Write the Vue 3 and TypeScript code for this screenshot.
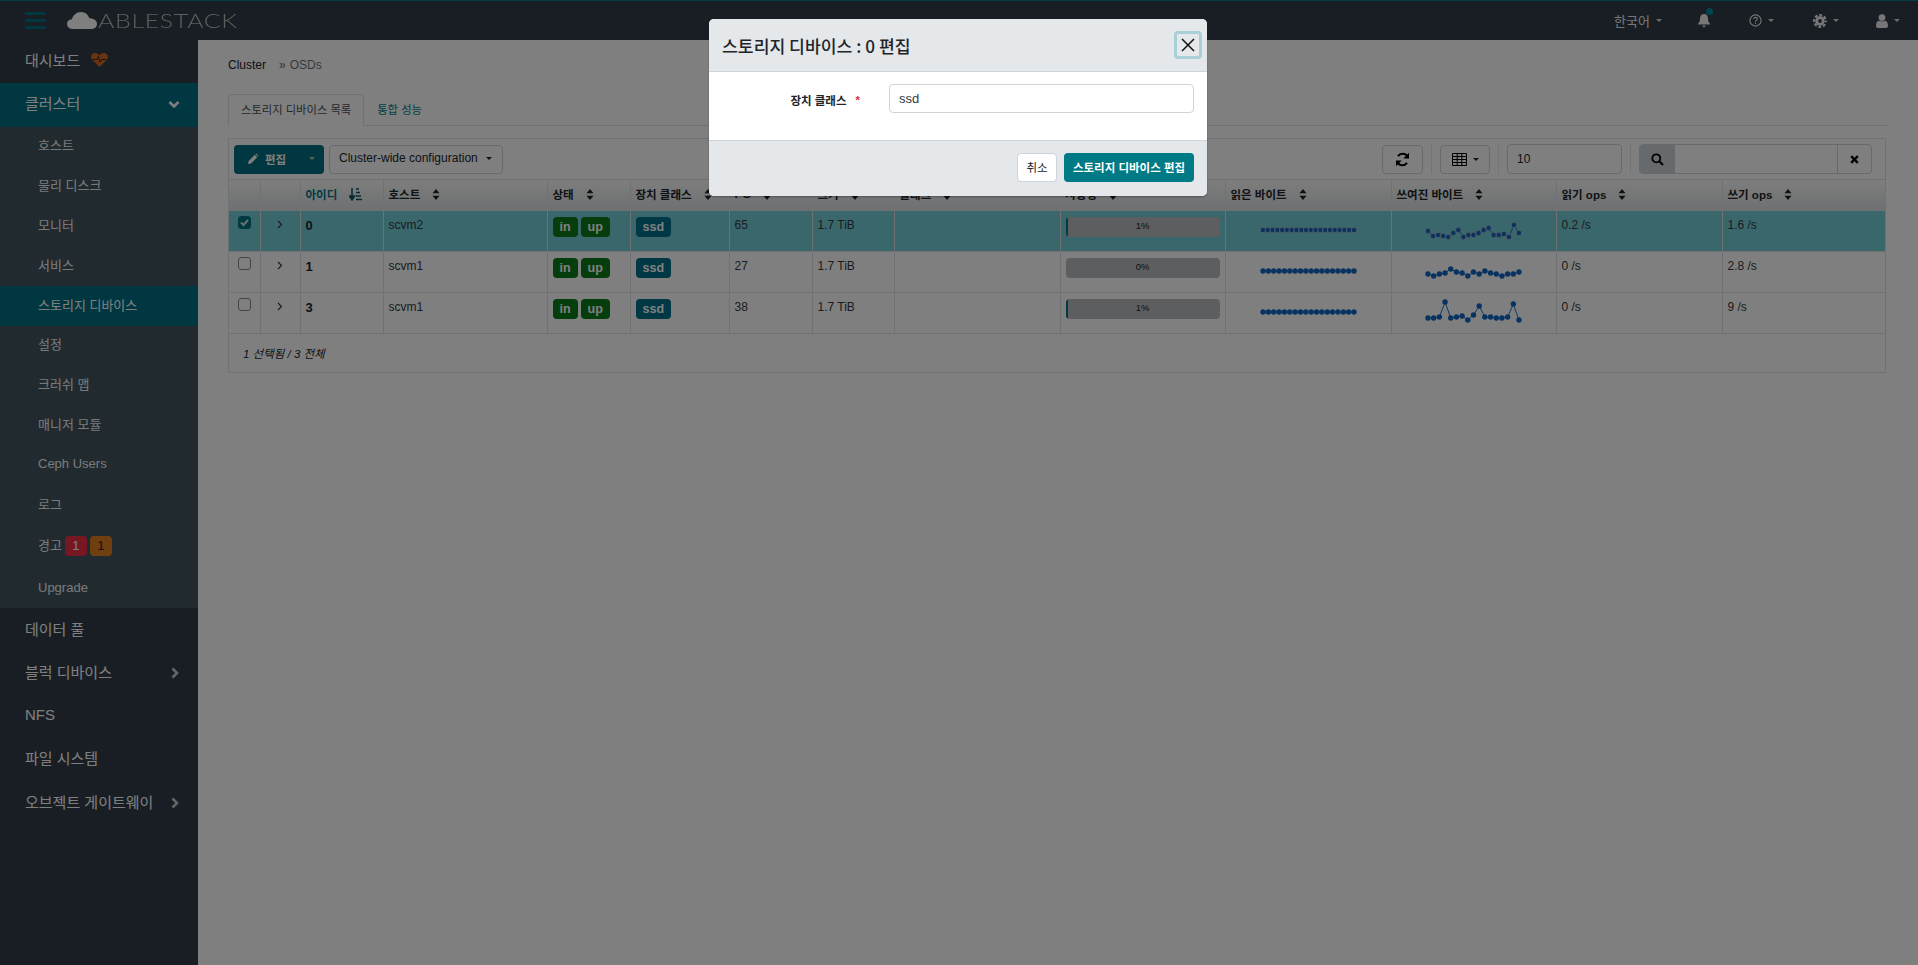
<script setup lang="ts">
interface Row { id: string; host: string; pg: string; usage: number; read: number[]; write: number[]; selected: boolean }

const menu = ['호스트', '물리 디스크', '모니터', '서비스', '스토리지 디바이스', '설정', '크러쉬 맵', '매니저 모듈', 'Ceph Users', '로그']
const headers = ['아이디', '호스트', '상태', '장치 클래스', 'PG', '크기', '플래그', '사용량', '읽은 바이트', '쓰여진 바이트', '읽기 ops', '쓰기 ops']
const flat = (n: number) => Array.from({ length: n }, () => 10)
const rows: Row[] = [
  { id: '0', host: 'scvm2', pg: '65', usage: 1, read: flat(20), selected: true,
    write: [11, 16, 15, 16, 17, 13, 10, 17, 15, 15, 13, 10, 8, 15, 15, 14, 17, 5, 13] },
  { id: '1', host: 'scvm1', pg: '27', usage: 0, read: flat(18), selected: false,
    write: [13, 15, 13, 12, 8, 11, 12, 15, 11, 13, 10, 12, 13, 15, 13, 13, 11] },
  { id: '3', host: 'scvm1', pg: '38', usage: 1, read: flat(18), selected: false,
    write: [16, 16, 15, 0, 16, 15, 14, 18, 13, 4, 15, 15, 16, 16, 15, 2, 18] }
]
const rowValues = (r: Row) => (r.id === '0' ? ['0.2 /s', '1.6 /s'] : r.id === '1' ? ['0 /s', '2.8 /s'] : ['0 /s', '9 /s'])
const xAt = (i: number, n: number, w: number) => 3 + (i * (w - 6)) / (n - 1)
const points = (v: number[], w: number) => v.map((y, i) => `${xAt(i, v.length, w)},${y + 4}`).join(' ')
</script>

<template>
  <div class="page">
    <header class="navbar">
      <div class="burger"><span></span><span></span><span></span></div>
      <div class="logo">
        <svg width="30" height="17" viewBox="0 0 30 17"><path d="M6 17C2.500 17 0 14.800 0 12C0 9.300 2 7.500 4.800 7.300C6 3.500 9.500 0 14 0C18.200 0 21.200 2.800 22.300 6.300C26.500 6.300 30 8.500 30 12C30 15 27.500 17 24 17Z" fill="#9a9a9a"/></svg>
        <span class="logo-text">ABLESTACK</span>
      </div>
      <nav class="nav-right">
        <span class="nav-item lang">한국어<i class="caret"></i></span>
        <span class="nav-item bell">
          <svg width="14" height="15" viewBox="0 0 14 15"><path d="M7 1C4 1 3 3.500 3 6C3 9 1.500 10 .5 11.500H13.500C12.500 10 11 9 11 6C11 3.500 10 1 7 1ZM5.500 12.500C5.500 13.500 6.200 14.300 7 14.300C7.800 14.300 8.500 13.500 8.500 12.500Z" fill="#777"/></svg>
          <b class="dot"></b>
        </span>
        <span class="nav-item help">
          <svg width="13" height="13" viewBox="0 0 13 13"><circle cx="6.500" cy="6.500" r="5.600" fill="none" stroke="#777" stroke-width="1.100"/><path d="M4.700 5C4.900 3.900 5.600 3.400 6.500 3.400C7.500 3.400 8.300 4 8.300 4.900C8.300 6.200 6.500 6.200 6.500 7.800M6.500 8.800V10" fill="none" stroke="#777" stroke-width="1.100"/></svg>
          <i class="caret"></i>
        </span>
        <span class="nav-item gear">
          <svg width="14" height="14" viewBox="0 0 14 14"><circle cx="7" cy="7" r="5.800" fill="none" stroke="#777" stroke-width="2.400" stroke-dasharray="2.800 1.755" stroke-dashoffset="1.400"/><circle cx="7" cy="7" r="3.300" fill="none" stroke="#777" stroke-width="2.800"/></svg>
          <i class="caret"></i>
        </span>
        <span class="nav-item user">
          <svg width="12" height="14" viewBox="0 0 12 14"><circle cx="6" cy="3.600" r="3.400" fill="#777"/><path d="M0 12C0 8.500 1.500 6.800 3 6.800C4 7.600 8 7.600 9 6.800C10.500 6.800 12 8.500 12 12C12 13.300 11 14 10 14H2C1 14 0 13.300 0 12Z" fill="#777"/></svg>
          <i class="caret"></i>
        </span>
      </nav>
    </header>

    <div class="shell">
      <aside class="sidebar">
        <div class="top-item">대시보드
          <svg class="heart" width="17" height="14" viewBox="0 0 17 14"><path d="M8.500 14L1.500 7C-.500 5 -.200 2 1.600 .8C3.500 -.500 6.500 0 8.500 2.500C10.500 0 13.500 -.500 15.400 .8C17.200 2 17.500 5 15.500 7Z" fill="#d2691e"/><path d="M2 6.500H6L7.500 3.500L9 9L10.500 6.500H15" fill="none" stroke="#1a2026" stroke-width=".9"/></svg>
        </div>
        <div class="top-item active">클러스터
          <svg class="chev" width="12" height="9" viewBox="0 0 12 9"><path d="M1.500 1.500L6 6L10.500 1.500" fill="none" stroke="#999" stroke-width="2.600"/></svg>
        </div>
        <div class="sub">
          <div v-for="m in menu" :key="m" class="sub-item" :class="{ current: m === '스토리지 디바이스' }">{{ m }}</div>
          <div class="sub-item alerts">경고 <span class="count red">1</span><span class="count amber">1</span></div>
          <div class="sub-item last">Upgrade</div>
        </div>
        <div class="top-item">데이터 풀</div>
        <div class="top-item">블럭 디바이스
          <svg class="chev" width="9" height="12" viewBox="0 0 9 12"><path d="M1.500 1.500L6 6L1.500 10.500" fill="none" stroke="#777" stroke-width="2.600"/></svg>
        </div>
        <div class="top-item">NFS</div>
        <div class="top-item">파일 시스템</div>
        <div class="top-item">오브젝트 게이트웨이
          <svg class="chev" width="9" height="12" viewBox="0 0 9 12"><path d="M1.500 1.500L6 6L1.500 10.500" fill="none" stroke="#777" stroke-width="2.600"/></svg>
        </div>
      </aside>

      <main class="main">
        <div class="crumbs"><span>Cluster</span><span class="sep">»</span><span class="muted">OSDs</span></div>
        <div class="tabs">
          <span class="tab on">스토리지 디바이스 목록</span>
          <span class="tab">통합 성능</span>
        </div>

        <section class="panel">
          <div class="toolbar">
            <div class="split">
              <span class="edit">
                <svg width="12" height="12" viewBox="0 0 12 12"><path d="M1 11L1.600 8L7.800 1.800L10.200 4.200L4 10.400ZM8.500 1.100L9.300 .4L11.600 2.700L10.900 3.500Z" fill="#888"/></svg>
                편집
              </span>
              <i class="caret"></i>
            </div>
            <span class="btn cluster">Cluster-wide configuration<i class="caret dark"></i></span>
            <div class="spacer"></div>
            <span class="btn refresh">
              <svg width="15" height="15" viewBox="0 0 15 15"><path d="M13 6C12.300 3.300 10.200 1.800 7.500 1.800C5.600 1.800 4 2.700 3 4.100M2 9C2.700 11.700 4.800 13.200 7.500 13.200C9.400 13.200 11 12.300 12 10.900" fill="none" stroke="#000" stroke-width="2.100"/><path d="M14 .8V6.500H8.300ZM1 14.200V8.500H6.700Z" fill="#000"/></svg>
            </span>
            <i class="vr"></i>
            <span class="btn cols">
              <svg width="15" height="13" viewBox="0 0 15 13"><path d="M.5 .5H14.500V12.500H.5ZM.5 3.500H14.500M.5 6.500H14.500M.5 9.500H14.500M5.200 .5V12.500M9.800 .5V12.500" fill="none" stroke="#000"/></svg>
              <i class="caret dark"></i>
            </span>
            <i class="vr"></i>
            <span class="btn limit">10</span>
            <i class="vr"></i>
            <div class="search">
              <span class="addon">
                <svg width="13" height="13" viewBox="0 0 13 13"><circle cx="5.300" cy="5.300" r="4" fill="none" stroke="#000" stroke-width="1.800"/><path d="M8.300 8.300L12 12" stroke="#000" stroke-width="2.200"/></svg>
              </span>
              <span class="field"></span>
              <span class="clear">
                <svg width="9" height="9" viewBox="0 0 9 9"><path d="M1.200 1.200L7.800 7.800M7.800 1.200L1.200 7.800" stroke="#000" stroke-width="2.400"/></svg>
              </span>
            </div>
          </div>

          <table>
            <colgroup>
              <col class="c-check" /><col class="c-exp" /><col class="c-id" /><col class="c-host" /><col class="c-state" /><col class="c-class" />
              <col class="c-pg" /><col class="c-size" /><col class="c-flag" /><col class="c-usage" /><col class="c-read" /><col class="c-write" /><col class="c-rops" /><col />
            </colgroup>
            <thead>
              <tr>
                <th></th><th></th>
                <th v-for="(h, i) in headers" :key="h" :class="{ sorted: i === 0 }">
                  <span class="th-in">
                    {{ h }}
                    <svg v-if="i === 0" width="13" height="13" viewBox="0 0 13 13"><path d="M3 0V10M.5 8L3 12L5.500 8Z" stroke="#0b5a66" stroke-width="1.500" fill="#0b5a66"/><path d="M7 1H10M7 4.500H11M7 8H12M7 11.500H13" stroke="#0b5a66" stroke-width="1.500"/></svg>
                    <svg v-else width="8" height="11" viewBox="0 0 8 11"><path d="M4 0L7.500 4.300H.5ZM4 11L.5 6.700H7.500Z" fill="#222"/></svg>
                  </span>
                </th>
              </tr>
            </thead>
            <tbody>
              <tr v-for="r in rows" :key="r.id" :class="{ selected: r.selected }">
                <td class="center">
                  <span class="box" :class="{ checked: r.selected }">
                    <svg v-if="r.selected" width="11" height="11" viewBox="0 0 11 11"><path d="M2 5.500L4.500 8L9 3" fill="none" stroke="#d8dee0" stroke-width="2"/></svg>
                  </span>
                </td>
                <td class="center">
                  <svg class="exp" width="6" height="9" viewBox="0 0 6 9"><path d="M1 1L4.500 4.500L1 8" fill="none" stroke="#333" stroke-width="1.100"/></svg>
                </td>
                <td class="strong id">{{ r.id }}</td>
                <td>{{ r.host }}</td>
                <td><span class="badge ok">in</span><span class="badge ok">up</span></td>
                <td><span class="badge info">ssd</span></td>
                <td>{{ r.pg }}</td>
                <td>1.7 TiB</td>
                <td></td>
                <td>
                  <div class="bar"><i :style="{ width: r.usage * 2 + 'px' }"></i><span>{{ r.usage }}%</span></div>
                </td>
                <td class="spark">
                  <svg width="97" height="30" :class="{ halo: r.selected }">
                    <polyline class="sl" :points="points(r.read, 97)" />
                    <circle v-for="(y, i) in r.read" :key="i" class="pt" :cx="xAt(i, r.read.length, 97)" :cy="y + 4" r="2.700" />
                  </svg>
                </td>
                <td class="spark">
                  <svg width="97" height="30" :class="{ halo: r.selected }">
                    <polyline class="sl" :points="points(r.write, 97)" />
                    <circle v-for="(y, i) in r.write" :key="i" class="pt" :cx="xAt(i, r.write.length, 97)" :cy="y + 4" r="2.700" />
                  </svg>
                </td>
                <td>{{ rowValues(r)[0] }}</td>
                <td>{{ rowValues(r)[1] }}</td>
              </tr>
            </tbody>
          </table>
          <div class="foot">1 선택됨 / 3 전체</div>
        </section>
      </main>
    </div>

    <div class="backdrop"></div>

    <div class="modal">
      <div class="modal-head">
        <h4>스토리지 디바이스 : 0 편집</h4>
        <span class="close">
          <svg width="14" height="14" viewBox="0 0 14 14"><path d="M1 1L13 13M13 1L1 13" stroke="#111" stroke-width="1.500"/></svg>
        </span>
      </div>
      <div class="modal-body">
        <label>장치 클래스 <em>*</em></label>
        <span class="input">ssd</span>
      </div>
      <div class="modal-foot">
        <span class="m-btn cancel">취소</span>
        <span class="m-btn submit">스토리지 디바이스 편집</span>
      </div>
    </div>
  </div>
</template>

<style>
html, body { margin: 0; background: #fff; }
</style>

<style scoped>
.page {
  position: relative;
  height: 965px;
  overflow: hidden;
  display: flex;
  flex-direction: column;
  font: 12px "Liberation Sans", "Noto Sans CJK KR", sans-serif;
  color: #343a40;
}
.navbar {
  height: 39px;
  flex: none;
  display: flex;
  align-items: center;
  background: #303c46;
  border-top: 1px solid #007a8c;
  color: #eee;
}
.burger { margin-left: 25px; width: 21px; display: flex; flex-direction: column; gap: 4px; }
.burger span { height: 3px; background: #00707f; border-radius: 1px; }
.logo { margin-left: 21px; display: flex; align-items: flex-end; height: 17px; }
.logo svg { display: block; filter: brightness(2); }
.logo-text {
  font: 300 19.500px/17px "Lato", sans-serif;
  letter-spacing: .5px;
  color: #bdbdbd;
  margin-left: 1px;
  transform: scaleX(1.280);
  transform-origin: left center;
  height: 17px;
}
.nav-right { margin-left: auto; display: flex; align-items: center; height: 100%; }
.nav-item { display: flex; align-items: center; gap: 6px; position: relative; font-size: 13px; }
.nav-item svg { filter: brightness(2); }
.lang { margin-right: 35px; }
.bell { margin-right: 38px; }
.help { margin-right: 39px; }
.gear { margin-right: 37px; }
.user { margin-right: 18px; }
.dot { position: absolute; left: 9px; top: -5px; width: 7px; height: 7px; border-radius: 50%; background: #008a9e; }
.caret {
  display: inline-block;
  width: 0;
  height: 0;
  border-left: 3.500px solid transparent;
  border-right: 3.500px solid transparent;
  border-top: 3.500px solid #ddd;
}
.caret.dark { border-top-color: #222; }

.shell { flex: 1; display: flex; min-height: 0; }
.sidebar { width: 198px; flex: none; background: #303c46; color: #fff; font-size: 15px; }
.top-item { height: 43.300px; display: flex; align-items: center; padding: 0 0 4px 25px; gap: 11px; position: relative; box-sizing: border-box; }
.top-item.active { background: #006f80; }
.chev { position: absolute; right: 18px; top: 50%; transform: translateY(-50%); }
.top-item .chev { filter: brightness(1.700); }
.sub { background: #42545e; color: #f0f4f6; font-size: 13px; }
.sub-item { height: 39.900px; box-sizing: border-box; display: flex; align-items: center; padding: 0 0 4px 38px; gap: 3px; }
.sub-item.current { background: #006f80; color: #fff; }
.sub-item.last { padding-bottom: 2px; }
.alerts { height: 43px; align-items: flex-start; padding: 10px 0 0 38px; line-height: 20px; }
.count { width: 22px; height: 20px; border-radius: 4px; display: inline-flex; align-items: center; justify-content: center; font-size: 13px; }
.red { background: #ee2f48; color: #fff; }
.amber { background: #de7e20; color: #222; }

.main { flex: 1; min-width: 0; padding: 0 30px; background: #fff; }
.crumbs { height: 54px; padding-bottom: 22px; box-sizing: border-box; display: flex; align-items: flex-end; color: #212529; }
.sep { margin: 0 4px 0 13px; color: #666; }
.muted { color: #6c757d; }
.tabs { display: flex; height: 31px; border-bottom: 1px solid #dee2e6; box-sizing: content-box; }
.tab { padding: 0 13px 2px; display: flex; align-items: center; color: #00808f; font-size: 11.300px; height: 31px; box-sizing: border-box; }
.tab.on { padding: 0 12px 2px; border: 1px solid #dee2e6; border-bottom: 1px solid #fff; border-radius: 4px 4px 0 0; color: #495057; background: #fff; height: 32px; }
.panel { margin-top: 12px; margin-right: 2px; border: 1px solid #dee2e6; }
.toolbar { height: 40px; padding: 5px 13px 5px 5px; box-sizing: border-box; display: flex; align-items: center; gap: 5px; }
.split { width: 90px; height: 29px; background: #006f80; border-radius: 4px; color: #fff; display: flex; align-items: center; font-weight: 700; font-size: 11.500px; box-sizing: border-box; padding: 0 9px 1px 13px; justify-content: space-between; }
.split .caret { border-top-color: #bbb; }
.edit { display: flex; align-items: center; gap: 6px; }
.edit svg { filter: brightness(2); }
.btn { height: 29px; box-sizing: border-box; border: 1px solid #ced4da; border-radius: 4px; display: inline-flex; align-items: center; color: #212529; }
.cluster { width: 174px; padding: 0 0 2px 9px; gap: 8px; }
.spacer { flex: 1; }
.vr { width: 1px; height: 29px; background: #e6e9ec; margin: 0 3px; }
.refresh { width: 41px; justify-content: center; }
.cols { width: 50px; justify-content: center; gap: 6px; }
.limit { width: 115px; padding-left: 9px; height: 30px; }
.search { display: flex; width: 233px; height: 30px; border: 1px solid #ced4da; border-radius: 4px; box-sizing: border-box; }
.addon { width: 34px; background: #ced4da; display: flex; align-items: center; justify-content: center; border-right: 1px solid #ced4da; }
.field { flex: 1; }
.clear { width: 33px; display: flex; align-items: center; justify-content: center; border-left: 1px solid #ced4da; }

table { width: 100%; table-layout: fixed; border-collapse: collapse; }
.c-check { width: 31px; }
.c-exp { width: 40px; }
.c-id { width: 83px; }
.c-host { width: 164px; }
.c-state { width: 83px; }
.c-class { width: 99px; }
.c-pg { width: 83px; }
.c-size { width: 82px; }
.c-flag { width: 166px; }
.c-usage { width: 165px; }
.c-read { width: 166px; }
.c-write { width: 165px; }
.c-rops { width: 166px; }
th, td { border: 1px solid #dee2e6; padding: 0 5px; text-align: left; }
tr > :first-child { border-left: 0; }
tr > :last-child { border-right: 0; }
thead tr { height: 31px; background: linear-gradient(#fcfcfc, #dcdfe2); }
th { font-weight: 700; font-size: 11.500px; color: #212529; white-space: nowrap; padding-bottom: 2px; box-sizing: border-box; }
.th-in { display: inline-flex; align-items: center; gap: 12px; }
th.sorted { color: #007688; }
tbody tr { height: 41px; }
td { vertical-align: top; padding-top: 6px; color: #343a40; line-height: 16px; box-sizing: border-box; }
tr.selected td { background: #74ced6; }
.center { padding-left: 0; padding-right: 0; text-align: center; padding-top: 5px; }
.box { display: inline-block; width: 13px; height: 13px; border: 1px solid #888; border-radius: 3px; box-sizing: border-box; background: #fff; vertical-align: top; position: relative; }
.box.checked { background: #007688; border-color: #007688; }
.box svg { position: absolute; left: 0; top: 0; }
.exp { margin-top: 4px; }
.id { font-size: 13px; padding-top: 7px; }
.strong { font-weight: 700; color: #212529; }
.badge { display: inline-block; height: 20px; line-height: 20px; padding: 0 7px; border-radius: 4px; font-weight: 700; font-size: 12.500px; color: #fff; margin-right: 3px; vertical-align: top; }
.ok { background: #0a7a1a; }
.info { background: #00708a; padding: 0 7px; }
.bar { height: 20px; background: #b8bcc0; border-radius: 4px; position: relative; overflow: hidden; }
.bar i { position: absolute; left: 0; top: 0; bottom: 0; background: #007688; }
.bar span { position: absolute; inset: 0; text-align: center; font-size: 9.500px; line-height: 17px; color: #212529; }
.spark { padding: 0; text-align: center; vertical-align: middle; }
.spark svg { display: inline-block; vertical-align: middle; }
.sl { fill: none; stroke: #1c78d0; stroke-width: 1px; }
.pt { fill: #1166c0; }
svg.halo .pt { stroke: #b0bcc4; stroke-width: .8px; }
.foot { height: 38px; display: flex; align-items: center; padding-left: 14px; font-style: italic; font-size: 11.500px; color: #212529; }

.backdrop { position: absolute; inset: 0; background: rgba(0, 0, 0, .5); }
.modal {
  position: absolute;
  left: 709px;
  top: 19px;
  width: 498px;
  height: 177px;
  border-radius: 5px;
  overflow: hidden;
  display: flex;
  flex-direction: column;
  background: #fff;
  box-shadow: 0 1px 2px rgba(0, 0, 0, .3);
}
.modal-head { height: 53px; box-sizing: border-box; flex: none; display: flex; align-items: center; justify-content: space-between; padding: 0 5px 0 13px; background: #e4e8eb; border-bottom: 1px solid #ced4da; }
h4 { margin: 0; font: 500 17.200px "Noto Sans CJK KR", sans-serif; color: #212529; }
.close { width: 28px; height: 28px; box-sizing: border-box; border: 3px solid #a9d0d6; border-radius: 4px; display: flex; align-items: center; justify-content: center; }
.modal-body { flex: 1; display: flex; align-items: flex-start; padding-top: 12px; box-sizing: border-box; border-bottom: 1px solid #ced4da; }
label { width: 151px; height: 29px; padding-top: 3px; display: flex; align-items: center; justify-content: flex-end; gap: 9px; box-sizing: border-box; font-weight: 700; font-size: 11.500px; color: #212529; }
em { color: #e02840; font-style: normal; }
.input { margin-left: auto; margin-right: 13px; width: 305px; height: 29px; box-sizing: border-box; border: 1px solid #ced4da; border-radius: 4px; display: flex; align-items: center; padding-left: 9px; color: #343a40; font-size: 13px; }
.modal-foot { height: 55px; box-sizing: border-box; flex: none; display: flex; align-items: center; justify-content: flex-end; gap: 7px; padding: 0 13px 2px 0; background: #e4e8eb; }
.m-btn { height: 29px; padding-bottom: 2px; border-radius: 4px; display: inline-flex; align-items: center; justify-content: center; box-sizing: border-box; font-size: 11.500px; }
.cancel { width: 40px; background: #fff; border: 1px solid #ced4da; color: #212529; }
.submit { width: 130px; background: #007a85; color: #fff; font-weight: 700; }
</style>
